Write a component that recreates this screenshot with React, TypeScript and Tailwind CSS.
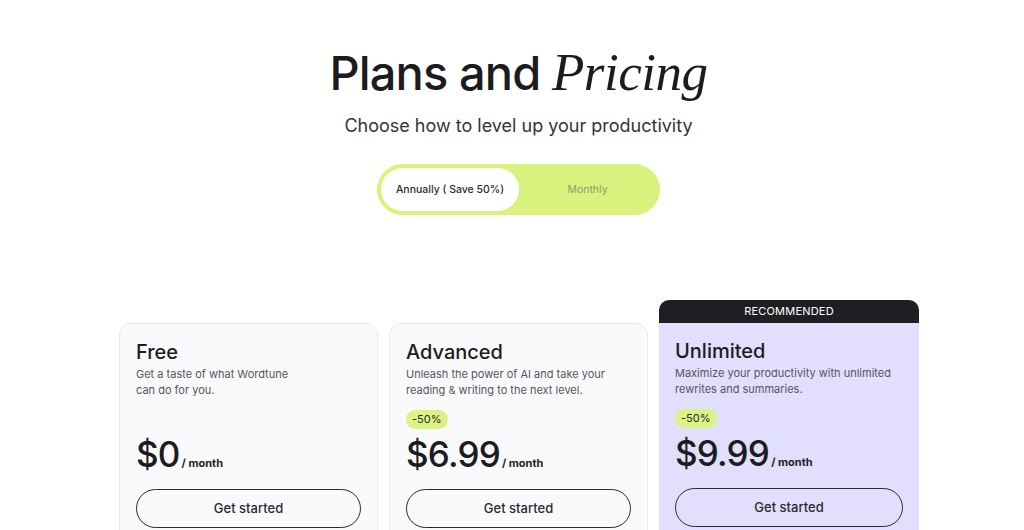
import { useState } from "react";

// planes de precios
const PLANS = [
  {
    name: "Free",
    desc: "Get a taste of what Wordtune\ncan do for you.",
    price: "$0",
    discount: false,
    recommended: false,
  },
  {
    name: "Advanced",
    desc: "Unleash the power of AI and take your\nreading & writing to the next level.",
    price: "$6.99",
    discount: true,
    recommended: false,
  },
  {
    name: "Unlimited",
    desc: "Maximize your productivity with unlimited\nrewrites and summaries.",
    price: "$9.99",
    discount: true,
    recommended: true,
  },
];

function PlanCard({ plan }: { plan: (typeof PLANS)[number] }) {
  const body = (
    <div
      className={`px-4 pt-4 pb-6 ${
        plan.recommended
          ? "bg-[#e2defd] rounded-b-[12px]"
          : "bg-[#fafafc] border border-[#e9e9ef] rounded-[12px]"
      }`}
    >
      <h3 className="text-[20px] leading-6 font-medium text-[#1c1c1f]">{plan.name}</h3>
      <p className="text-[11px] leading-4 text-[#55555c] whitespace-pre-line mt-[2px]">{plan.desc}</p>
      <div className="mt-[12px] h-[19px] flex items-center">
        {plan.discount && (
          <span className="flex items-center h-[19px] px-[6px] rounded-full bg-[#dcf283] text-[11px] leading-none text-[#2a2a2a]">
            -50%
          </span>
        )}
      </div>
      <div className="flex items-baseline h-[48px] mt-[1px]">
        <span className="text-[35px] leading-[48px] font-medium tracking-[-0.8px] text-[#1c1c1f]">
          {plan.price}
        </span>
        <span className="text-[11px] font-bold text-[#1c1c1f] ml-[2px]">/ month</span>
      </div>
      <button className="mt-[11px] w-full h-[39px] rounded-full border border-[#2a2a2e] text-[13px] font-medium text-[#2a2a2e]">
        Get started
      </button>
    </div>
  );

  if (plan.recommended) {
    return (
      <div className="w-[260px]">
        <div className="h-[23px] rounded-t-[10px] bg-[#1f1f23] flex items-center justify-center text-[11px] text-white tracking-[0.2px]">
          RECOMMENDED
        </div>
        {body}
      </div>
    );
  }
  return <div className="w-[259px] mt-[23px]">{body}</div>;
}

export default function App() {
  const [annual, setAnnual] = useState(true);

  return (
    <div
      className="min-h-screen bg-white overflow-hidden"
      style={{ fontFamily: "Inter, 'Noto Sans', sans-serif" }}
    >
      <header className="pt-[43px] pl-[13px] flex flex-col items-center">
        <h1 className="text-[47px] leading-[58px] font-medium tracking-[-0.9px] text-[#1c1c1f] whitespace-nowrap">
          Plans and{" "}
          <span
            className="italic font-normal text-[53px] tracking-[-0.5px]"
            style={{ fontFamily: "'Liberation Serif', serif" }}
          >
            Pricing
          </span>
        </h1>
        <p className="mt-[10px] text-[18px] leading-7 text-[#333338]">
          Choose how to level up your productivity
        </p>

        {/* selector anual / mensual */}
        <div className="mt-[24px] w-[283px] h-[51px] rounded-full bg-[#d9f27e] p-1 flex">
          <button
            onClick={() => setAnnual(true)}
            className={`w-[138px] rounded-full text-[10.5px] ${
              annual ? "bg-white text-[#2a2a2e] font-medium" : "text-[#8c9b6a]"
            }`}
          >
            Annually ( Save 50%)
          </button>
          <button
            onClick={() => setAnnual(false)}
            className={`flex-1 rounded-full text-[10.5px] ${
              !annual ? "bg-white text-[#2a2a2e] font-medium" : "text-[#8c9b6a]"
            }`}
          >
            Monthly
          </button>
        </div>
      </header>

      <section className="mt-[85px] ml-[119px] flex gap-[11px] items-start">
        {PLANS.map((p) => (
          <PlanCard key={p.name} plan={p} />
        ))}
      </section>
    </div>
  );
}
